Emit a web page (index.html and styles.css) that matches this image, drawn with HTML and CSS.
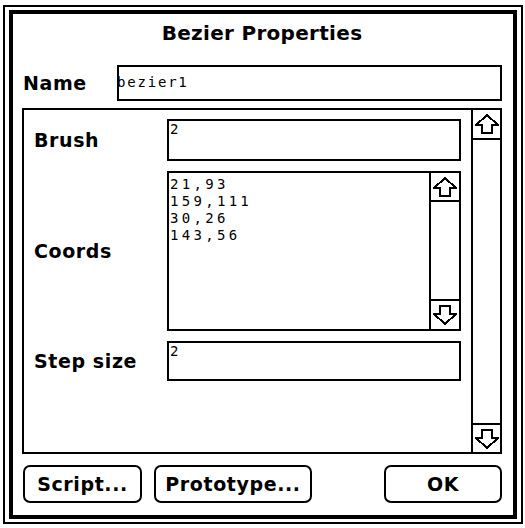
FILE: index.html
```html
<!DOCTYPE html>
<html lang="en">

<head>
    <meta charset="UTF-8">
    <meta name="viewport" content="width=device-width, initial-scale=1.0">
    <title>Bezier Properties</title>

    <link rel="stylesheet" href="styles.css">
</head>

<body>
    <div class="dialog">
        <div class="frame">
            <h1 class="title">Bezier Properties</h1>

            <div class="name-row">
                <span class="label name-label">Name</span>
                <div class="field name-field"><span class="clip">bezier1</span></div>
            </div>

            <div class="panel">
                <div class="props">
                    <div class="prop">
                        <span class="label">Brush</span>
                        <div class="field brush-field">2</div>
                    </div>
                    <div class="prop">
                        <span class="label">Coords</span>
                        <div class="field list">
                            <div class="list-text">21,93<br>159,111<br>30,26<br>143,56</div>
                            <div class="scrollbar small">
                                <div class="arrow up">
                                    <svg width="24" height="20" viewBox="0 0 24 20"><polygon points="12,1 23,11 17,11 17,19 7,19 7,11 1,11" /></svg>
                                </div>
                                <div class="track"></div>
                                <div class="arrow down">
                                    <svg width="24" height="20" viewBox="0 0 24 20"><polygon points="12,19 23,9 17,9 17,1 7,1 7,9 1,9" /></svg>
                                </div>
                            </div>
                        </div>
                    </div>
                    <div class="prop">
                        <span class="label">Step size</span>
                        <div class="field step-field">2</div>
                    </div>
                </div>

                <div class="scrollbar">
                    <div class="arrow up">
                        <svg width="24" height="20" viewBox="0 0 24 20"><polygon points="12,1 23,11 17,11 17,19 7,19 7,11 1,11" /></svg>
                    </div>
                    <div class="track"></div>
                    <div class="arrow down">
                        <svg width="24" height="20" viewBox="0 0 24 20"><polygon points="12,19 23,9 17,9 17,1 7,1 7,9 1,9" /></svg>
                    </div>
                </div>
            </div>

            <div class="buttons">
                <div class="btn btn-script">Script...</div>
                <div class="btn btn-proto">Prototype...</div>
                <div class="btn btn-ok">OK</div>
            </div>
        </div>
    </div>
</body>

</html>
```
FILE: styles.css
```css
* {
    margin: 0;
    padding: 0;
    box-sizing: border-box;
}

body {
    background: #ffffff;
    color: #000000;
    font-family: "DejaVu Sans", "Liberation Sans", sans-serif;
}

/* double outline of the dialog: thin line, gap, thick line */
.dialog {
    width: 520px;
    height: 519px;
    margin: 5px 0 0 3px;
    border: 2px solid #000;
    padding: 3px 4px;
}

.frame {
    height: 100%;
    border: 4px solid #000;
    padding: 0 11px 0 9px;
    display: flex;
    flex-direction: column;
}

.title {
    margin-top: 7px;
    font-size: 20px;
    line-height: 24px;
    letter-spacing: 0.3px;
    text-align: center;
    font-weight: bold;
}

.label {
    font-size: 19px;
    font-weight: bold;
    letter-spacing: 0.6px;
    white-space: nowrap;
}

.field {
    border: 2px solid #000;
    font-family: "DejaVu Sans Mono", "Liberation Mono", monospace;
    font-size: 14px;
    line-height: 17px;
    letter-spacing: 3.3px;
    overflow: hidden;
}

/* name row */
.name-row {
    margin-top: 20px;
    height: 36px;
    display: flex;
    align-items: center;
}

.name-label {
    width: 94px;
    margin-left: 1px;
}

.name-field {
    flex: 1;
    height: 36px;
    padding-top: 7px;
    letter-spacing: 1.8px;
}

.name-field .clip {
    display: block;
    margin-left: -2px;
}

/* scrolling property list */
.panel {
    margin-top: 7px;
    height: 346px;
    border: 2px solid #000;
    display: flex;
}

.props {
    flex: 1;
    padding: 9px 10px 0 10px;
    display: flex;
    flex-direction: column;
    gap: 10px;
}

.prop {
    display: flex;
    align-items: center;
}

.prop .label {
    width: 133px;
}

.prop .field {
    flex: 1;
    padding-left: 1px;
}

.brush-field {
    height: 42px;
}

.step-field {
    height: 40px;
}

.list {
    height: 160px;
    display: flex;
}

.list-text {
    flex: 1;
    padding-top: 3px;
}

.scrollbar {
    width: 29px;
    border-left: 2px solid #000;
    display: flex;
    flex-direction: column;
}

.scrollbar.small {
    width: 30px;
}

.track {
    flex: 1;
}

.arrow {
    height: 30px;
    display: flex;
    align-items: center;
    justify-content: center;
}

.arrow.up {
    border-bottom: 2px solid #000;
}

.arrow.down {
    height: 29px;
    border-top: 2px solid #000;
}

.scrollbar.small .arrow.up {
    height: 29px;
}

.scrollbar.small .arrow.down {
    height: 30px;
}

.arrow svg {
    display: block;
    shape-rendering: crispEdges;
}

.arrow polygon {
    fill: none;
    stroke: #000;
    stroke-width: 2;
}

/* bottom buttons */
.buttons {
    margin-top: 11px;
    height: 38px;
    display: flex;
    margin-left: 1px;
}

.btn {
    height: 38px;
    border: 2px solid #000;
    border-radius: 7px;
    font-size: 19px;
    font-weight: bold;
    letter-spacing: 0.6px;
    line-height: 34px;
    text-align: center;
}

.btn-script {
    width: 119px;
}

.btn-proto {
    width: 158px;
    margin-left: 12px;
}

.btn-ok {
    width: 118px;
    margin-left: auto;
}
```
